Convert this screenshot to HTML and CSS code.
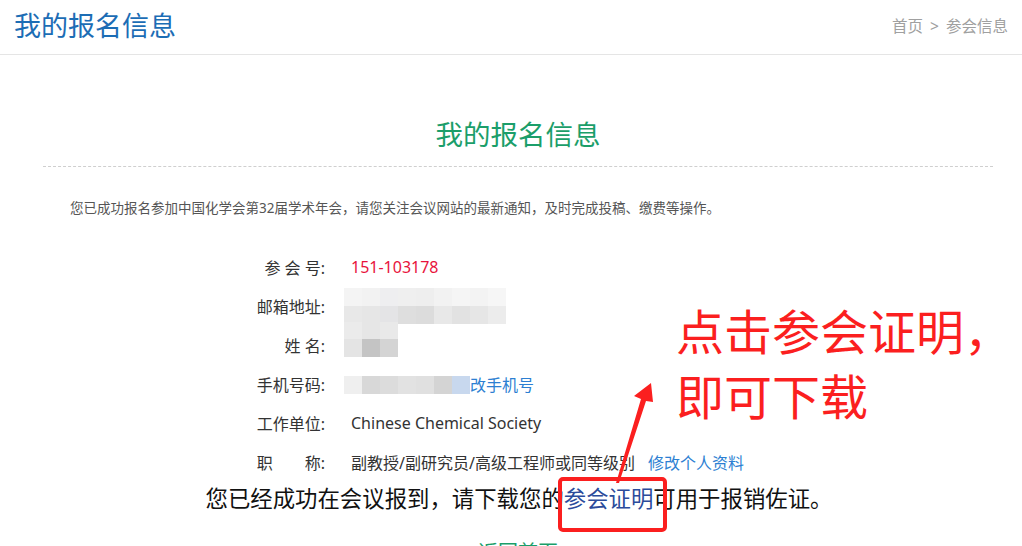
FILE: index.html
```html
<!DOCTYPE html>
<html lang="zh-CN">
<head>
    <meta charset="UTF-8">
    <title>我的报名信息</title>
    <link rel="stylesheet" href="styles.css">
</head>
<body>
    <div class="header">
        <h1>我的报名信息</h1>
        <div class="crumbs">首页<span class="sep">&gt;</span>参会信息</div>
    </div>

    <div class="container">
        <h2 class="title">我的报名信息</h2>
        <p class="intro">您已成功报名参加中国化学会第32届学术年会，请您关注会议网站的最新通知，及时完成投稿、缴费等操作。</p>

        <div class="info">
            <div class="row">
                <span class="label">参 会 号:</span>
                <span class="value num">151-103178</span>
            </div>
            <div class="row">
                <span class="label">邮箱地址:</span>
                <div class="value">
                    <div class="mosaic">
                        <i style="background:#f4f4f4"></i><i style="background:#f2f2f2"></i><i style="background:#eeeef0"></i><i style="background:#efefef"></i><i style="background:#eeeeee"></i><i style="background:#f2f2f2"></i><i style="background:#f5f5f5"></i><i style="background:#f3f3f3"></i><i style="background:#f6f6f6"></i>
                        <i style="background:#e8e8e8"></i><i style="background:#e6e6e6"></i><i style="background:#e4e4e6"></i><i style="background:#dedede"></i><i style="background:#dcdcdc"></i><i style="background:#e8e8e8"></i><i style="background:#e2e2e2"></i><i style="background:#e6e6e6"></i><i style="background:#ececec"></i>
                    </div>
                </div>
            </div>
            <div class="row">
                <span class="label">姓 名:</span>
                <div class="value">
                    <div class="mosaic small">
                        <i style="background:#ebebeb"></i><i style="background:#e6e6e6"></i><i style="background:#e9e9e9"></i>
                        <i style="background:#e4e4e4"></i><i style="background:#c4c4c4"></i><i style="background:#d4d4d4"></i>
                    </div>
                </div>
            </div>
            <div class="row">
                <span class="label">手机号码:</span>
                <div class="value phone">
                    <div class="mosaic line">
                        <i style="background:#efefef"></i><i style="background:#d8d8d8"></i><i style="background:#dcdcdc"></i><i style="background:#e2e2e2"></i><i style="background:#e0e0e0"></i><i style="background:#d4d4d4"></i><i style="background:#c8d8ee"></i>
                    </div>
                    <a class="link">改手机号</a>
                </div>
            </div>
            <div class="row">
                <span class="label">工作单位:</span>
                <span class="value">Chinese Chemical Society</span>
            </div>
            <div class="row">
                <span class="label">职&emsp;&emsp;称:</span>
                <span class="value">副教授/副研究员/高级工程师或同等级别<a class="link edit">修改个人资料</a></span>
            </div>
        </div>

        <p class="notice">您已经成功在会议报到，请下载您的<a class="cert">参会证明</a>可用于报销佐证。</p>
        <p class="back">返回首页</p>
    </div>

    <!-- screenshot annotation -->
    <div class="tip">点击参会证明，<br>即可下载</div>
    <div class="tip-box"></div>
    <svg class="tip-arrow" width="1022" height="546" viewBox="0 0 1022 546">
        <polygon points="616,483 641,399 634,396 651,383 653,402 646,401 619,483" fill="#fb1f1f"/>
    </svg>
</body>
</html>
```

FILE: styles.css
```css
body {
    margin: 0;
    font-family: "Noto Sans", "Noto Sans CJK SC", sans-serif;
    color: #333;
    background: #fff;
    overflow: hidden;
    height: 546px;
    position: relative;
}

.header {
    height: 54px;
    border-bottom: 1px solid #e5e5e5;
    display: flex;
    align-items: center;
    justify-content: space-between;
    padding: 0 14px 0 14px;
}

.header h1 {
    margin: 0;
    font-size: 27px;
    font-weight: normal;
    color: #1c6db5;
    line-height: 36px;
    margin-top: -2px;
}

.crumbs {
    font-size: 15.5px;
    color: #a0a0a0;
    margin-top: -4px;
}

.crumbs .sep {
    margin: 0 7px;
}

.container {
    width: 950px;
    margin-left: 43px;
    padding-top: 62px;
}

.title {
    margin: 0;
    text-align: center;
    font-size: 27.5px;
    font-weight: normal;
    line-height: 36px;
    color: #1b9e6a;
    padding-bottom: 13px;
    border-bottom: 1px dashed #cfcfcf;
}

.intro {
    margin: 31px 0 0 27px;
    font-size: 13.5px;
    line-height: 20px;
    color: #555;
}

.info {
    margin-top: 29px;
    padding-left: 157px;
}

.row {
    height: 39px;
    display: flex;
    align-items: center;
    font-size: 16px;
}

.label {
    width: 125px;
    text-align: right;
    white-space: pre;
    color: #333;
}

.value {
    margin-left: 26px;
    color: #333;
    white-space: nowrap;
}

.num {
    color: #e8133c;
}

.link {
    color: #2d7fd2;
}

.edit {
    margin-left: 13px;
}

.mosaic {
    display: grid;
    grid-template-columns: repeat(9, 18px);
    grid-auto-rows: 18px;
    margin-left: -7px;
}

.mosaic i {
    display: block;
}

.mosaic.small {
    grid-template-columns: repeat(3, 18px);
    grid-auto-rows: 17.5px;
    margin-bottom: 11px;
}

.phone {
    display: flex;
    align-items: center;
}

.phone .mosaic.line {
    grid-template-columns: repeat(7, 18px);
    grid-auto-rows: 18px;
    margin-top: 3px;
}

.notice {
    margin: 0;
    text-align: center;
    font-size: 22.4px;
    line-height: 36px;
    color: #111;
    margin-left: 2px;
}

.cert {
    color: #2b4b9b;
}

.back {
    margin: 22px 0 0;
    text-align: center;
    font-size: 20px;
    line-height: 28px;
    color: #1b9e6a;
}

.tip {
    position: absolute;
    left: 676px;
    top: 299px;
    font-size: 48px;
    line-height: 65px;
    color: #fb1f1f;
    white-space: nowrap;
}

.tip-box {
    position: absolute;
    left: 558px;
    top: 477px;
    width: 101px;
    height: 47px;
    border: 4px solid #fb1f1f;
    border-radius: 5px;
}

.tip-arrow {
    position: absolute;
    left: 0;
    top: 0;
}
```
